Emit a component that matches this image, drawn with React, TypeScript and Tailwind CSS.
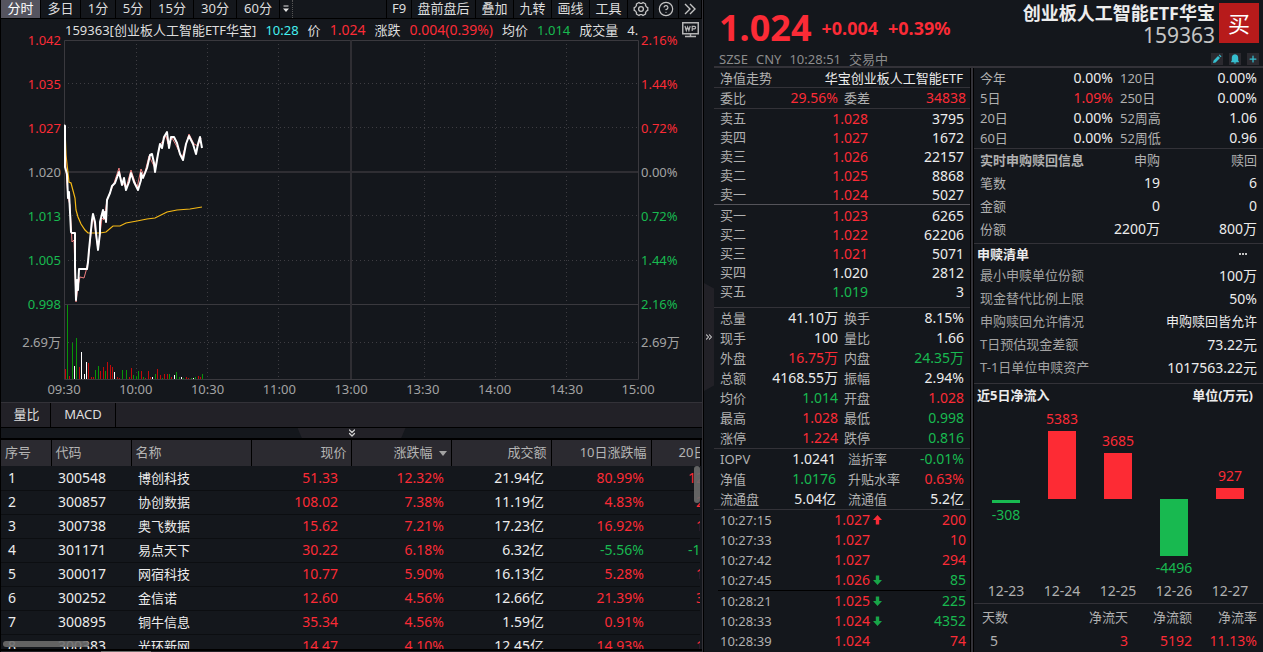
import type { ReactNode } from "react"
import { clsx } from "clsx"
import { ChevronsDown, ChevronsRight, CircleHelp, Plus } from "lucide-react"

type Tone = "up" | "down" | "flat" | "muted"

const toneClass: Record<Tone, string> = {
  up: "text-[#fb2b36]",
  down: "text-[#18b950]",
  flat: "text-[#ececec]",
  muted: "text-[#a3a3a3]",
}

const periods = [
  { label: "分时", width: "w-10" },
  { label: "多日", width: "w-10" },
  { label: "1分", width: "w-[35px]" },
  { label: "5分", width: "w-[35px]" },
  { label: "15分", width: "w-[43px]" },
  { label: "30分", width: "w-[43px]" },
  { label: "60分", width: "w-[43px]" },
]

const tools = [
  { label: "F9", width: "w-[25px]" },
  { label: "盘前盘后", width: "w-16" },
  { label: "叠加", width: "w-[38px]" },
  { label: "九转", width: "w-[38px]" },
  { label: "画线", width: "w-[38px]" },
  { label: "工具", width: "w-[38px]" },
]

const priceAxis: { price: string; pct: string; tone: Tone }[] = [
  { price: "1.042", pct: "2.16%", tone: "up" },
  { price: "1.035", pct: "1.44%", tone: "up" },
  { price: "1.027", pct: "0.72%", tone: "up" },
  { price: "1.020", pct: "0.00%", tone: "muted" },
  { price: "1.013", pct: "0.72%", tone: "down" },
  { price: "1.005", pct: "1.44%", tone: "down" },
  { price: "0.998", pct: "2.16%", tone: "down" },
]

const times = ["09:30", "10:00", "10:30", "11:00", "13:00", "13:30", "14:00", "14:30", "15:00"]

// plot coordinates, 574 x 340
const pricePath =
  "M0 85 L1 86 L1 127 L3 134 L4 158 L5 152 L7 192 L8 193 L11 193 L11 226 L12 260 L13 240 L14 250 L15 229 L23 229 L24 222 L25 210 L27 190 L28 180 L29 174 L31 182 L32 193 L34 210 L36 193 L36 182 L37 178 L39 170 L40 178 L41 172 L42 182 L43 160 L46 153 L48 146 L51 143 L55 132 L58 145 L60 138 L62 150 L65 142 L67 133 L70 142 L74 150 L77 140 L77 133 L79 138 L83 128 L86 115 L88 114 L90 123 L91 132 L94 114 L96 104 L98 108 L100 97 L103 92 L105 108 L107 97 L110 97 L113 103 L116 114 L119 120 L122 104 L125 96 L129 104 L132 114 L134 104 L136 97 L138 108"

const navPath =
  "M1 86 L2 130 L4 158 L6 165 L8 202 L10 200 L12 262 L14 246 L16 237 L20 238 L22 231 L24 222 L29 174 L34 210 L38 178 L40 180 L43 160 L50 143 L55 128 L57 140 L62 148 L67 130 L73 148 L77 129 L80 136 L85 116 L91 128 L96 105 L102 96 L104 104 L108 98 L112 105 L118 118 L122 104 L125 94 L130 104 L134 106 L137 98"

const averagePath =
  "M1 88 L2 115 L4 133 L5 142 L7 143 L11 158 L12 170 L14 177 L17 184 L21 190 L24 193 L36 193 L42 192 L49 186 L56 186 L62 183 L73 181 L83 179 L91 178 L103 172 L113 170 L126 169 L138 167"

const volumeColor = { r: "#c00a0a", g: "#089408", w: "#ffffff" }

// [x, height, colour]
const volumes: [number, number, "r" | "g" | "w"][] = [
  [1, 10, "r"], [3, 74, "g"], [5, 3, "r"], [8, 36, "g"], [10, 13, "w"], [12, 41, "g"], [15, 12, "r"],
  [17, 27, "w"], [20, 5, "w"], [22, 17, "w"], [24, 16, "r"], [27, 2, "r"], [29, 2, "r"], [31, 9, "g"],
  [34, 13, "g"], [36, 8, "r"], [39, 12, "r"], [41, 8, "g"], [43, 17, "r"], [46, 14, "r"], [48, 12, "r"],
  [50, 7, "w"], [53, 2, "r"], [55, 1, "r"], [58, 9, "g"], [62, 9, "g"], [65, 2, "r"], [67, 11, "r"],
  [69, 4, "g"], [72, 3, "g"], [74, 8, "g"], [77, 8, "r"], [79, 2, "g"], [81, 1, "r"], [84, 8, "r"],
  [86, 2, "r"], [88, 2, "w"], [91, 5, "g"], [93, 10, "r"], [96, 4, "r"], [98, 1, "g"], [100, 5, "r"],
  [103, 5, "r"], [105, 5, "g"], [107, 2, "r"], [110, 4, "w"], [112, 7, "g"], [115, 2, "g"], [117, 2, "w"],
  [119, 1, "g"], [122, 2, "r"], [124, 1, "r"], [127, 1, "g"], [129, 1, "w"], [131, 2, "g"], [134, 3, "r"],
  [136, 2, "r"], [138, 5, "g"],
]

const columns = [
  { label: "序号", width: "w-[50px]", align: "text-left pl-1" },
  { label: "代码", width: "w-20", align: "text-left pl-1" },
  { label: "名称", width: "w-[120px]", align: "text-left pl-1" },
  { label: "现价", width: "w-[100px]", align: "text-right pr-1" },
  { label: "涨跌幅", width: "w-[100px]", align: "text-right pr-1", sorted: true },
  { label: "成交额", width: "w-[100px]", align: "text-right pr-1" },
  { label: "10日涨跌幅", width: "w-[100px]", align: "text-right pr-1" },
  { label: "20日", width: "w-[49px]", align: "text-left pl-[27px] overflow-hidden" },
]

// the last column is only partly scrolled into view
const stocks = [
  ["300548", "博创科技", "51.33", "12.32%", "21.94亿", "80.99%", "12"],
  ["300857", "协创数据", "108.02", "7.38%", "11.19亿", "4.83%", "2"],
  ["300738", "奥飞数据", "15.62", "7.21%", "17.23亿", "16.92%", "1"],
  ["301171", "易点天下", "30.22", "6.18%", "6.32亿", "-5.56%", "-1"],
  ["300017", "网宿科技", "10.77", "5.90%", "16.13亿", "5.28%", "1"],
  ["300252", "金信诺", "12.60", "4.56%", "12.66亿", "21.39%", "3"],
  ["300895", "铜牛信息", "35.34", "4.56%", "1.59亿", "0.91%", ""],
  ["300383", "光环新网", "14.47", "4.10%", "12.45亿", "14.93%", "1"],
]

type BookRow = [string, string, string, Tone]

const asks: BookRow[] = [
  ["卖五", "1.028", "3795", "up"],
  ["卖四", "1.027", "1672", "up"],
  ["卖三", "1.026", "22157", "up"],
  ["卖二", "1.025", "8868", "up"],
  ["卖一", "1.024", "5027", "up"],
]

const bids: BookRow[] = [
  ["买一", "1.023", "6265", "up"],
  ["买二", "1.022", "62206", "up"],
  ["买三", "1.021", "5071", "up"],
  ["买四", "1.020", "2812", "flat"],
  ["买五", "1.019", "3", "down"],
]

type Pair = [string, string, Tone, string, string, Tone]

const stats: Pair[] = [
  ["总量", "41.10万", "flat", "换手", "8.15%", "flat"],
  ["现手", "100", "flat", "量比", "1.66", "flat"],
  ["外盘", "16.75万", "up", "内盘", "24.35万", "down"],
  ["总额", "4168.55万", "flat", "振幅", "2.94%", "flat"],
  ["均价", "1.014", "down", "开盘", "1.028", "up"],
  ["最高", "1.028", "up", "最低", "0.998", "down"],
  ["涨停", "1.224", "up", "跌停", "0.816", "down"],
]

const fundStats: Pair[] = [
  ["IOPV", "1.0241", "flat", "溢折率", "-0.01%", "down"],
  ["净值", "1.0176", "down", "升贴水率", "0.63%", "up"],
  ["流通盘", "5.04亿", "flat", "流通值", "5.2亿", "flat"],
]

const returns: Pair[] = [
  ["今年", "0.00%", "flat", "120日", "0.00%", "flat"],
  ["5日", "1.09%", "up", "250日", "0.00%", "flat"],
  ["20日", "0.00%", "flat", "52周高", "1.06", "flat"],
  ["60日", "0.00%", "flat", "52周低", "0.96", "flat"],
]

const ticks: { time: string; price: string; qty: string; tone: Tone; dir?: "up" | "down" }[] = [
  { time: "10:27:15", price: "1.027", qty: "200", tone: "up", dir: "up" },
  { time: "10:27:33", price: "1.027", qty: "10", tone: "up" },
  { time: "10:27:42", price: "1.027", qty: "294", tone: "up" },
  { time: "10:27:45", price: "1.026", qty: "85", tone: "down", dir: "down" },
  { time: "10:28:21", price: "1.025", qty: "225", tone: "down", dir: "down" },
  { time: "10:28:33", price: "1.024", qty: "4352", tone: "down", dir: "down" },
  { time: "10:28:39", price: "1.024", qty: "74", tone: "up" },
]

const redemption = [
  ["最小申赎单位份额", "100万"],
  ["现金替代比例上限", "50%"],
  ["申购赎回允许情况", "申购赎回皆允许"],
  ["T日预估现金差额", "73.22元"],
  ["T-1日单位申赎资产", "1017563.22元"],
]

const flows = [
  { date: "12-23", value: -308 },
  { date: "12-24", value: 5383 },
  { date: "12-25", value: 3685 },
  { date: "12-26", value: -4496 },
  { date: "12-27", value: 927 },
]

function ToolButton({ width, active, label, children }: { width: string; active?: boolean; label?: string; children: ReactNode }) {
  return (
    <button
      type="button"
      aria-label={label}
      className={clsx(
        "flex h-[18px] shrink-0 items-center justify-center border-r border-black whitespace-nowrap",
        width,
        active ? "bg-[#55545f] text-white" : "text-[#dedede]"
      )}
    >
      {children}
    </button>
  )
}

function GearIcon() {
  return (
    <svg viewBox="0 0 16 16" className="size-4" fill="none" stroke="#c4c4c4" strokeWidth="1.3" strokeLinejoin="round">
      <path d="M6 1.5 L7 2.3 H9 L10 1.5 L12.6 3 L12.5 4.4 L13.5 6 L14.8 6.6 V9.4 L13.5 10 L12.5 11.6 L12.6 13 L10 14.5 L9 13.7 H7 L6 14.5 L3.4 13 L3.5 11.6 L2.5 10 L1.2 9.4 V6.6 L2.5 6 L3.5 4.4 L3.4 3 Z" />
      <circle cx="8" cy="8" r="2.4" />
    </svg>
  )
}

function Toolbar() {
  return (
    <div className="flex h-[19px] shrink-0 border-b border-black">
      {periods.map((p, i) => (
        <ToolButton key={p.label} width={p.width} active={i === 0}>
          {p.label}
        </ToolButton>
      ))}
      <button type="button" aria-label="更多周期" className="flex w-[13px] items-center justify-center border-r border-dotted border-[#555]">
        <svg viewBox="0 0 6 8" className="h-2 w-1.5">
          <path d="M0.5 0.5 H5.5 V1.5 H0.5 Z M0 3.5 H6 L3 7 Z" fill="#e4e4e4" />
        </svg>
      </button>
      <div className="flex-1 border-r border-black" />
      {tools.map((t) => (
        <ToolButton key={t.label} width={t.width}>
          {t.label}
        </ToolButton>
      ))}
      <ToolButton width="w-[26px]" label="设置">
        <GearIcon />
      </ToolButton>
      <ToolButton width="w-[25px]" label="帮助">
        <CircleHelp className="size-4 text-[#c4c4c4]" strokeWidth={1.8} />
      </ToolButton>
      <ToolButton width="w-[23px]" label="展开">
        <svg viewBox="0 0 12 12" className="size-3" fill="none" stroke="#c4c4c4" strokeWidth="1.4">
          <path d="M1 1 L6 6 L1 11 M6 1 L11 6 L6 11" />
        </svg>
      </ToolButton>
    </div>
  )
}

function QuoteLine() {
  return (
    <div className="flex h-[22px] shrink-0 items-center pl-[64px]">
      <div className="flex h-5 min-w-0 flex-1 items-center gap-[9px] overflow-hidden leading-5 whitespace-nowrap text-[#dedede]">
        <span>159363[创业板人工智能ETF华宝]</span>
        <span className="text-[#44f0f0]">10:28</span>
        <span>价</span>
        <span className={clsx("text-sm/5", toneClass.up)}>1.024</span>
        <span>涨跌</span>
        <span className={clsx("text-sm/5", toneClass.up)}>0.004(0.39%)</span>
        <span>均价</span>
        <span className={toneClass.down}>1.014</span>
        <span>成交量</span>
        <span>4.</span>
      </div>
      <div className="flex w-16 justify-end pr-[3px]">
        <svg viewBox="0 0 17 16" className="h-4 w-[17px]" fill="none" stroke="#b4b4b4">
          <rect x="0.75" y="0.75" width="15.5" height="11" strokeWidth="1.5" />
          <path d="M3 4 L4.3 8.5 L5.6 5 L6.9 8.5 L8.2 4 M10.2 9 V4.3 H12.4 Q13.6 4.3 13.6 5.5 Q13.6 6.8 12.4 6.8 H10.2" strokeWidth="1.2" />
          <path d="M8.5 12 V14 M3 14.5 H14" strokeWidth="1.5" />
        </svg>
      </div>
    </div>
  )
}

function PriceChart() {
  return (
    <div className="flex h-[340px] shrink-0">
      <div className="-mt-2.5 flex w-16 shrink-0 flex-col items-end pr-[3px] leading-5">
        <div className="flex h-[284px] flex-col justify-between text-right">
          {priceAxis.map((a) => (
            <span key={a.price} className={toneClass[a.tone]}>
              {a.price}
            </span>
          ))}
        </div>
        <span className="mt-[18px] text-[#a3a3a3]">2.69万</span>
      </div>
      <svg viewBox="0 0 575 340" preserveAspectRatio="none" className="h-[340px] min-w-0 flex-1">
        <g fill="none" stroke="#3e3d42" strokeDasharray="1 3">
          {[72, 143, 214, 360, 431, 502].map((x) => (
            <path key={x} d={`M${x + 0.5} 0 V339`} />
          ))}
          {[43, 87, 175, 220, 302].map((y) => (
            <path key={y} d={`M0 ${y + 0.5} H574`} />
          ))}
        </g>
        <g fill="none" stroke="#3a393e">
          <path d="M0.5 0.5 H574.5 V339.5 H0.5 Z M0 264.5 H574" />
          <path d="M287 0 V339 M0 132 H574" strokeWidth="2" stroke="#2f2e33" />
        </g>
        {volumes.map(([x, h, c]) => (
          <rect key={x} x={x} y={339 - h} width="1" height={h} fill={volumeColor[c]} />
        ))}
        <path d={averagePath} fill="none" stroke="#f5b916" strokeWidth="1.2" />
        <path d={navPath} fill="none" stroke="#f08080" strokeWidth="1" />
        <path d={pricePath} fill="none" stroke="#ffffff" strokeWidth="2" strokeLinejoin="round" />
      </svg>
      <div className="-mt-2.5 flex w-[63px] shrink-0 flex-col pl-0.5 leading-5">
        <div className="flex h-[284px] flex-col justify-between">
          {priceAxis.map((a) => (
            <span key={a.price} className={toneClass[a.tone]}>
              {a.pct}
            </span>
          ))}
        </div>
        <span className="mt-[18px] text-[#a3a3a3]">2.69万</span>
      </div>
    </div>
  )
}

function StockTable() {
  return (
    <div className="relative min-h-0 flex-1 overflow-hidden border-t-2 border-black">
      <table className="w-[699px] table-fixed border-collapse">
        <thead>
          <tr className="h-[26px] bg-[#2b2a30] text-[#b4b4b4]">
            {columns.map((c) => (
              <th key={c.label} className={clsx("border-r border-black p-0 font-normal whitespace-nowrap", c.width, c.align)}>
                {c.label}
                {c.sorted && <span className="ml-1.5 inline-block border-x-4 border-t-[5px] border-x-transparent border-t-[#a3a3a3] align-middle" />}
              </th>
            ))}
          </tr>
        </thead>
        <tbody>
          {stocks.map(([code, name, price, change, amount, d10, d20], i) => (
            <tr key={code} className="h-6 border-b border-[#0c0e11] text-right text-sm/5 text-[#ececec]">
              <td className="py-0 pl-[7px] text-left">{i + 1}</td>
              <td className="py-0 pl-[7px] text-left">{code}</td>
              <td className="py-0 pl-[7px] text-left text-[13px]">{name}</td>
              <td className="py-0 pr-[13px] text-[#fb2b36]">{price}</td>
              <td className="py-0 pr-[7px] text-[#fb2b36]">{change}</td>
              <td className="py-0 pr-[7px]">{amount}</td>
              <td className={clsx("py-0 pr-[7px]", d10.startsWith("-") ? toneClass.down : toneClass.up)}>{d10}</td>
              <td
                className={clsx(
                  "overflow-hidden py-0 pr-0 text-left",
                  d20.length > 1 ? "pl-[37px]" : "pl-[45px]",
                  d20.startsWith("-") ? toneClass.down : toneClass.up
                )}
              >
                {d20}
              </td>
            </tr>
          ))}
        </tbody>
      </table>
      <div className="absolute top-[26px] right-0.5 h-[37px] w-1.5 rounded-full bg-[#6c6c6c]/90" />
      <div className="absolute bottom-0.5 left-0.5 h-1.5 w-[86px] rounded-full bg-[#6c6c6c]/90" />
    </div>
  )
}

function MarketPanel() {
  return (
    <main className="flex min-w-0 flex-1 flex-col overflow-hidden border-l border-black">
      <Toolbar />
      <QuoteLine />
      <div className="-mt-px -ml-px">
        <PriceChart />
      </div>
      <div className="flex h-[22px] shrink-0 justify-between pr-11 pl-[43px] leading-[18px] text-[#a3a3a3]">
        {times.map((t) => (
          <span key={t} className="w-10 text-center">
            {t}
          </span>
        ))}
      </div>
      <div className="flex h-[26px] shrink-0 border-y border-t-[#333238] border-b-black bg-[#222127]">
        <button type="button" className="w-[50px] border-r border-black pl-0.5 text-[#dedede]">
          量比
        </button>
        <button type="button" className="w-[65px] border-r border-black text-[#dedede]">
          MACD
        </button>
      </div>
      <div className="flex h-2.5 shrink-0 justify-center">
        <button
          type="button"
          aria-label="收起"
          className="flex h-2.5 w-[108px] items-center justify-center bg-[#222127] [clip-path:polygon(0_0,100%_0,96%_100%,4%_100%)]"
        >
          <ChevronsDown className="size-3 text-[#d0d0d0]" strokeWidth={2.5} />
        </button>
      </div>
      <StockTable />
      <div className="flex h-[3px] shrink-0 border-t-2 border-black bg-[#222127] pl-[100px]">
        <div className="h-px w-[50px] bg-[#6c6c6c]" />
      </div>
    </main>
  )
}

function FundHeader() {
  return (
    <header className="flex h-[68px] shrink-0 justify-between border-b-2 border-[#333238] pr-1 pl-[5px]">
      <div>
        <div className="flex h-[51px] items-center gap-2.5 pt-1 font-bold text-[#fb2b36]">
          <span className="text-4xl">1.024</span>
          <span className="text-lg">+0.004</span>
          <span className="text-lg">+0.39%</span>
        </div>
        <div className="flex h-4 items-center gap-2 leading-4 text-[#8c8c8c]">
          <span>SZSE</span>
          <span>CNY</span>
          <span>10:28:51</span>
          <span>交易中</span>
        </div>
      </div>
      <div>
        <div className="flex gap-1 pt-[3px]">
          <div className="text-right whitespace-nowrap">
            <h1 className="text-lg/5 font-bold text-[#ececec]">创业板人工智能ETF华宝</h1>
            <div className="text-[21px]/6 text-[#c4c4c4]">159363</div>
          </div>
          <button type="button" className="size-10 shrink-0 bg-[#b71b1b] text-[22px] text-white">
            买
          </button>
        </div>
        <div className="flex justify-end gap-1.5 pt-1.5 text-[#36bfd0]">
          <button type="button" aria-label="编辑" className="flex size-3 items-center justify-center bg-[#2b2a30]">
            <svg viewBox="0 0 12 12" className="size-3" fill="currentColor">
              <path d="M2 10 L2.6 7.4 L7 3 L9 5 L4.6 9.4 Z M7.7 2.3 L8.6 1.5 L10.5 3.4 L9.7 4.3 Z" />
            </svg>
          </button>
          <button type="button" aria-label="提醒" className="flex size-3 items-center justify-center bg-[#2b2a30]">
            <svg viewBox="0 0 12 12" className="size-3" fill="currentColor">
              <path d="M6 1.2 C8.5 1.4 9.2 3.2 9.2 5 V7.6 L10 8.8 V9.2 H2 V8.8 L2.8 7.6 V5 C2.8 3.2 3.5 1.4 6 1.2 Z M4.8 9.6 H7.2 V10.5 H4.8 Z" />
            </svg>
          </button>
          <button type="button" aria-label="添加" className="flex size-3 items-center justify-center bg-[#2b2a30]">
            <Plus className="size-2.5" strokeWidth={3} />
          </button>
        </div>
      </div>
    </header>
  )
}

function PairRows({ rows, grid, second }: { rows: Pair[]; grid: string; second: string }) {
  return (
    <dl>
      {rows.map(([l1, v1, t1, l2, v2, t2]) => (
        <div key={l1} className={clsx("grid h-5 items-center leading-5 whitespace-nowrap", grid)}>
          <dt className="text-[#b0b0b0]">{l1}</dt>
          <dd className={clsx("text-right text-sm/5", toneClass[t1])}>{v1}</dd>
          <dt className={clsx("text-[#b0b0b0]", second)}>{l2}</dt>
          <dd className={clsx("text-right text-sm/5", toneClass[t2])}>{v2}</dd>
        </div>
      ))}
    </dl>
  )
}

function BookRows({ rows }: { rows: BookRow[] }) {
  return (
    <table className="w-full table-fixed border-collapse">
      <tbody>
        {rows.map(([label, price, qty, tone]) => (
          <tr key={label} className="h-[19px] text-right text-sm/[19px]">
            <th className="w-[60px] p-0 text-left text-[13px] font-normal text-[#b0b0b0]">{label}</th>
            <td className={clsx("w-[88px] p-0", toneClass[tone])}>{price}</td>
            <td className="p-0 text-[#ececec]">{qty}</td>
          </tr>
        ))}
      </tbody>
    </table>
  )
}

function TickArrow({ dir }: { dir: "up" | "down" }) {
  return (
    <svg viewBox="0 0 9 10" className={clsx("ml-[3px] h-2.5 w-[9px]", dir === "up" ? "text-[#fb2b36]" : "rotate-180 text-[#18a548]")}>
      <path d="M4.5 0 L9 5 H6.2 V9.5 H2.8 V5 H0 Z" fill="currentColor" />
    </svg>
  )
}

function OrderBook() {
  return (
    <section className="w-64 shrink-0">
      <div className="flex h-5 items-center justify-between border-b border-[#333238] pr-[7px] pl-1.5 leading-[18px] text-[#b0b0b0]">
        <span>净值走势</span>
        <span className="text-[#ececec]">华宝创业板人工智能ETF</span>
      </div>
      <div className="border-b border-[#333238] pr-1 pl-1.5">
        <PairRows rows={[["委比", "29.56%", "up", "委差", "34838", "up"]]} grid="grid-cols-[40px_78px_40px_1fr]" second="pl-1.5" />
      </div>
      <div className="border-b border-[#55545a] pr-1.5 pl-1.5">
        <BookRows rows={asks} />
      </div>
      <div className="border-b border-[#333238] pt-px pr-1.5 pb-1.5 pl-1.5">
        <BookRows rows={bids} />
      </div>
      <div className="border-b border-[#333238] pr-1.5 pl-1.5">
        <PairRows rows={stats} grid="grid-cols-[40px_78px_40px_1fr]" second="pl-1.5" />
      </div>
      <div className="border-b border-[#333238] pr-1.5 pl-1.5">
        <PairRows rows={fundStats} grid="grid-cols-[40px_76px_68px_1fr]" second="pl-3" />
      </div>
      <div className="px-1">
        <table className="w-full table-fixed border-collapse">
          <tbody>
            {ticks.map((t, i) => (
              <tr key={t.time} className={clsx("h-5 text-right text-sm/5", i === 3 && "border-b border-black")}>
                <td className="w-[70px] p-0 pl-0.5 text-left text-[13px] text-[#b0b0b0]">{t.time}</td>
                <td className="w-[82px] p-0 text-[#fb2b36]">{t.price}</td>
                <td className="w-5 p-0">{t.dir && <TickArrow dir={t.dir} />}</td>
                <td className={clsx("p-0", toneClass[t.tone])}>{t.qty}</td>
              </tr>
            ))}
          </tbody>
        </table>
      </div>
    </section>
  )
}

function FlowChart() {
  return (
    <div className="flex h-[197px] pr-[5px] pl-1">
      {flows.map(({ date, value }) => {
        const up = value > 0
        const bar = <div className={clsx("w-7 shrink-0", up ? "bg-[#fd2b34]" : "bg-[#18b950]")} style={{ height: Math.floor(Math.abs(value) / 78.8) }} />
        const text = <span className={clsx("text-sm/6", up ? toneClass.up : toneClass.down)}>{value}</span>
        return (
          <div key={date} className="flex flex-1 flex-col items-center">
            <div className="flex h-[94px] flex-col items-center justify-end">
              {up && text}
              {up && bar}
            </div>
            <div className="mt-px flex h-20 flex-col items-center">
              {!up && bar}
              {!up && text}
            </div>
            <span className="text-sm/6 text-[#b0b0b0]">{date}</span>
          </div>
        )
      })}
    </div>
  )
}

function FundInfo() {
  return (
    <section className="min-w-0 flex-1">
      <div className="border-b border-[#333238] pr-1.5 pl-1.5">
        <PairRows rows={returns} grid="grid-cols-[60px_73px_60px_1fr]" second="pl-[7px]" />
      </div>
      <div className="border-b border-[#333238] pb-[3px]">
        <table className="w-full table-fixed border-collapse">
          <thead>
            <tr className="h-[22px] leading-5 text-[#b0b0b0]">
              <th className="w-[116px] p-0 pl-1.5 text-left font-bold whitespace-nowrap">实时申购赎回信息</th>
              <th className="w-[70px] p-0 text-right font-normal">申购</th>
              <th className="p-0 pr-1.5 text-right font-normal">赎回</th>
            </tr>
          </thead>
          <tbody className="text-right text-sm/5 text-[#ececec]">
            {[
              ["笔数", "19", "6"],
              ["金额", "0", "0"],
              ["份额", "2200万", "800万"],
            ].map(([label, buy, sell]) => (
              <tr key={label} className="h-[23px]">
                <th className="p-0 pl-1.5 text-left text-[13px] font-normal text-[#b0b0b0]">{label}</th>
                <td className="p-0">{buy}</td>
                <td className="p-0 pr-1.5">{sell}</td>
              </tr>
            ))}
          </tbody>
        </table>
      </div>
      <div className="border-b border-[#333238] pb-1 pl-[3px]">
        <div className="flex h-5 items-center justify-between pr-4 leading-5 text-[#ececec]">
          <h2 className="font-bold">申赎清单</h2>
          <button type="button" aria-label="更多" className="flex gap-px">
            <i className="size-0.5 bg-[#c4c4c4]" />
            <i className="size-0.5 bg-[#c4c4c4]" />
            <i className="size-0.5 bg-[#c4c4c4]" />
          </button>
        </div>
        <dl>
          {redemption.map(([label, value]) => (
            <div key={label} className="flex h-[23px] items-center justify-between pr-1.5 pl-[3px]">
              <dt className="text-[#a3a3a3]">{label}</dt>
              <dd className={clsx("text-[#ececec]", label === "申购赎回允许情况" ? "text-[13px]" : "text-sm/5")}>{value}</dd>
            </div>
          ))}
        </dl>
      </div>
      <div className="flex h-[22px] items-center justify-between pr-2.5 pl-[3px] leading-5 font-bold text-[#ececec]">
        <h2>近5日净流入</h2>
        <span>单位(万元)</span>
      </div>
      <FlowChart />
      <table className="w-full table-fixed border-collapse border-t border-[#333238]">
        <thead>
          <tr className="h-[26px] text-right leading-5 text-[#b0b0b0]">
            <th className="p-0 pl-2 text-left font-normal">天数</th>
            <th className="w-[81px] p-0 font-normal">净流天</th>
            <th className="w-16 p-0 font-normal">净流额</th>
            <th className="w-[71px] p-0 pr-1.5 font-normal">净流率</th>
          </tr>
        </thead>
        <tbody>
          <tr className="h-[22px] text-right text-sm/5 text-[#fb2b36]">
            <td className="p-0 pl-4 text-left text-[#b0b0b0]">5</td>
            <td className="p-0">3</td>
            <td className="p-0">5192</td>
            <td className="p-0 pr-1.5">11.13%</td>
          </tr>
        </tbody>
      </table>
    </section>
  )
}

export default function App() {
  return (
    <div className="flex h-screen overflow-hidden bg-[#14171c] font-['Noto_Sans','Noto_Sans_CJK_SC',sans-serif] text-[13px]">
      <MarketPanel />
      <div className="w-0.5 shrink-0 border-r border-black bg-[#333238]" />
      <div className="w-2.5 shrink-0 pt-[283px]">
        <button
          type="button"
          aria-label="收起侧栏"
          className="flex h-[108px] w-2.5 items-center justify-center bg-[#222127] [clip-path:polygon(0_0,100%_5%,100%_95%,0_100%)]"
        >
          <ChevronsRight className="size-2.5 text-[#d0d0d0]" strokeWidth={2.5} />
        </button>
      </div>
      <aside className="flex w-[549px] shrink-0 flex-col">
        <FundHeader />
        <div className="flex min-h-0 flex-1 overflow-hidden">
          <OrderBook />
          <div className="w-1 shrink-0 border-x border-black bg-[#333238]" />
          <FundInfo />
        </div>
      </aside>
    </div>
  )
}
